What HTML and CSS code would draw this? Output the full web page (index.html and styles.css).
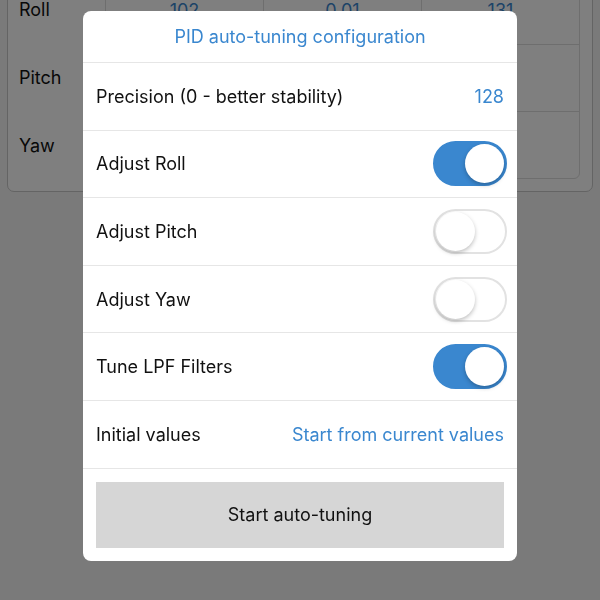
FILE: index.html
```html
<!DOCTYPE html>
<html>
<head>
<meta charset="utf-8">
<link rel="stylesheet" href="styles.css">
</head>
<body>
<div class="page">
  <div class="card">
    <div class="labels">
      <div class="label">Roll</div>
      <div class="label">Pitch</div>
      <div class="label">Yaw</div>
    </div>
    <div class="table">
      <div class="trow"><div class="cell">102</div><div class="cell">0.01</div><div class="cell">131</div></div>
      <div class="trow"><div class="cell"></div><div class="cell"></div><div class="cell"></div></div>
      <div class="trow"><div class="cell"></div><div class="cell"></div><div class="cell"></div></div>
    </div>
  </div>
</div>
<div class="overlay">
  <div class="dialog">
    <div class="header">PID auto-tuning configuration</div>
    <div class="row"><span class="text">Precision (0 - better stability)</span><span class="value">128</span></div>
    <div class="row"><span class="text">Adjust Roll</span><span class="toggle on"><span class="knob"></span></span></div>
    <div class="row"><span class="text">Adjust Pitch</span><span class="toggle"><span class="knob"></span></span></div>
    <div class="row"><span class="text">Adjust Yaw</span><span class="toggle"><span class="knob"></span></span></div>
    <div class="row"><span class="text">Tune LPF Filters</span><span class="toggle on"><span class="knob"></span></span></div>
    <div class="row"><span class="text">Initial values</span><span class="value">Start from current values</span></div>
    <div class="footer"><div class="button">Start auto-tuning</div></div>
  </div>
</div>
</body>
</html>
```
FILE: styles.css
```css
* { box-sizing: border-box; }
html, body {
  margin: 0;
  padding: 0;
  width: 600px;
  height: 600px;
  overflow: hidden;
  background: #f4f4f4;
  font-family: Inter, "Open Sans", sans-serif;
  color: #111;
}
.page {
  padding: 0 7px;
}
.card {
  margin-top: -38px;
  background: #fff;
  border: 1px solid #c8c8c8;
  border-radius: 7px;
  padding: 12px 12px 12px 11px;
  display: flex;
}
.labels {
  width: 86px;
  display: flex;
  flex-direction: column;
}
.label {
  height: 68px;
  display: flex;
  align-items: center;
  font-size: 18px;
}
.table {
  flex: 1;
  border: 1px solid #dcdcdc;
  border-radius: 6px;
  display: flex;
  flex-direction: column;
}
.trow {
  height: 67px;
  display: flex;
  border-top: 1px solid #dcdcdc;
}
.trow:first-child { border-top: none; height: 68px; }
.cell {
  flex: 1;
  display: flex;
  align-items: center;
  justify-content: center;
  border-left: 1px solid #dcdcdc;
  color: #3a87cf;
  font-size: 18px;
}
.cell:first-child { border-left: none; }

.overlay {
  position: fixed;
  inset: 0;
  background: rgba(0, 0, 0, 0.5);
  display: flex;
  justify-content: center;
  align-items: flex-start;
  padding-top: 11px;
}
.dialog {
  width: 434px;
  background: #fff;
  border-radius: 8px;
  overflow: hidden;
}
.header {
  height: 52px;
  display: flex;
  align-items: center;
  justify-content: center;
  color: #3a87cf;
  font-size: 18px;
  border-bottom: 1px solid #e6e6e6;
}
.row {
  height: 67.6px;
  display: flex;
  align-items: center;
  justify-content: space-between;
  padding: 0 13px;
  border-bottom: 1px solid #e6e6e6;
  font-size: 18px;
}
.value { color: #3a87cf; }
.toggle {
  width: 74px;
  height: 45px;
  border-radius: 23px;
  border: 2px solid #e2e2e2;
  background: #fff;
  position: relative;
  margin-right: -3px;
}
.toggle.on {
  background: #3a87cf;
  border-color: #3a87cf;
}
.knob {
  position: absolute;
  top: 1px;
  left: 1px;
  width: 39px;
  height: 39px;
  border-radius: 50%;
  background: #fff;
  box-shadow: 0 2px 4px rgba(0, 0, 0, 0.25);
}
.toggle.on .knob { left: 30px; }
.footer {
  padding: 13px;
}
.button {
  height: 66px;
  background: #d6d6d6;
  display: flex;
  align-items: center;
  justify-content: center;
  font-size: 18px;
  color: #111;
}
```
